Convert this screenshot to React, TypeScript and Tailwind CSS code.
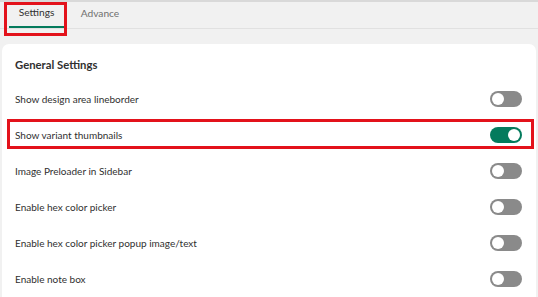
import { useState } from "react";

/* Settings panel — tabs + toggle list */

const ROWS = [
  { label: "Show design area lineborder", on: false },
  { label: "Show variant thumbnails", on: true, marked: true },
  { label: "Image Preloader in Sidebar", on: false },
  { label: "Enable hex color picker", on: false },
  { label: "Enable hex color picker popup image/text", on: false },
  { label: "Enable note box", on: false },
];

function Toggle({ on }: { on: boolean }) {
  return (
    <span
      className={`flex h-[16px] w-[32px] items-center rounded-full p-[2px] ${
        on ? "justify-end bg-[#047b5d]" : "justify-start bg-[#8a8a8a]"
      }`}
    >
      <span className="h-[12px] w-[12px] rounded-full bg-white" />
    </span>
  );
}

export default function App() {
  const [tab] = useState("settings");

  return (
    <div className="relative h-[297px] w-[538px] overflow-hidden border-t-2 border-[#d9d9d9] bg-[#f1f1f1] font-['Lato',sans-serif] text-[#303030]">
      {/* Tabs */}
      <div className="flex h-[27px] border-b border-[#e1e1e1] pl-[9px] text-[10.2px]">
        <div
          className={`flex w-[55px] items-center justify-center border-b-[2px] pb-[2px] ${
            tab === "settings" ? "border-[#047b5d] text-[#303030]" : "border-transparent"
          }`}
        >
          Settings
        </div>
        <div className="ml-[8px] flex w-[56px] items-center justify-center pb-[2px] text-[#6f6f6f]">
          Advance
        </div>
      </div>

      {/* annotation box round the active tab */}
      <div className="pointer-events-none absolute left-[4px] top-0 h-[34px] w-[63px] border-[3px] border-[#e3121b]" />

      {/* Card */}
      <div className="ml-[2px] mt-[15px] h-[300px] w-[534px] rounded-[7px] bg-white pt-[13px]">
        <h2 className="h-[16px] pl-[13px] text-[11.3px] leading-[16px] font-bold">General Settings</h2>
        <div className="mt-[8px]">
          {ROWS.map((row) => (
            <div key={row.label} className="relative flex h-[36px] items-center justify-between pl-[13px] pr-[14px]">
              <span className="text-[10px]">{row.label}</span>
              <Toggle on={row.on} />
              {row.marked && (
                <div className="pointer-events-none absolute bottom-[4px] left-[5px] right-[2px] top-[2px] border-[3px] border-[#e3121b]" />
              )}
            </div>
          ))}
        </div>
      </div>
    </div>
  );
}
